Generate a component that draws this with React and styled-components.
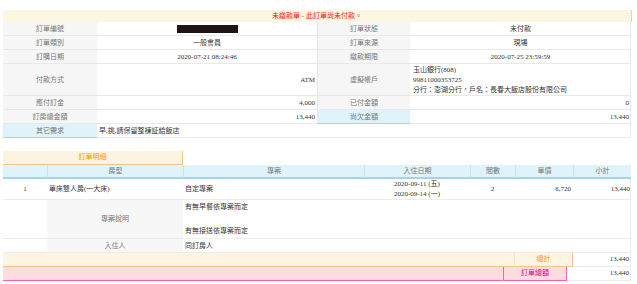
import React from "react";
import styled, { createGlobalStyle } from "styled-components";

const Global = createGlobalStyle`
  *, *::before, *::after { box-sizing: border-box; }
  html, body { margin: 0; padding: 0; background: #fff; }
  body {
    font-family: "Liberation Serif", "Noto Sans CJK TC", serif;
    font-size: 7px;
    color: #333;
  }
`;

const Page = styled.div`
  padding: 10px 0 0 3px;
  width: 631px;
`;

const InfoGrid = styled.div`
  display: grid;
  grid-template-columns: 94px 220px 93px 221px;
  width: 628px;
  border-right: 1px solid #ececec;
`;

const Banner = styled.div`
  grid-column: 1 / -1;
  height: 12px;
  line-height: 12px;
  background: #fdf6e0;
  border-right: 1px solid #efd39e;
  margin-right: -1px;
  color: #f21515;
  text-align: center;
`;

const Label = styled.div`
  min-height: 14px;
  display: flex;
  align-items: center;
  justify-content: center;
  padding: 1px 2px 1px;
  line-height: 10px;
  color: #777;
  background: ${(p) => (p.$blue ? "#dff3fb" : "#f6f6f6")};
  border-bottom: 1px solid ${(p) => (p.$blue ? "#a3d5ea" : "#e9e9e9")};
  border-left: ${(p) => (p.$divider ? "1px solid #e6e6e6" : "none")};
`;

const alignMap = { left: "flex-start", right: "flex-end", center: "center" };

const Value = styled.div`
  min-height: 14px;
  display: flex;
  flex-direction: column;
  justify-content: center;
  align-items: ${(p) => alignMap[p.$align || "center"]};
  text-align: ${(p) => p.$align || "center"};
  padding: ${(p) => (p.$tight ? "1px 3px 0" : "1px 2px")};
  line-height: 10px;
  color: #333;
  border-bottom: 1px solid #e9e9e9;
  grid-column: span ${(p) => p.$span || 1};
`;

const Masked = styled.span`
  display: block;
  width: 61px;
  height: 8px;
  background: #1d1414;
`;

const DetailSection = styled.div`
  margin-top: 13px;
  width: 628px;
`;

const Tab = styled.div`
  width: 180px;
  height: 14px;
  line-height: 13px;
  text-align: center;
  background: #fdf4df;
  border-bottom: 1px solid #f2c48e;
  border-right: 1px solid #f2c48e;
  color: #f29600;
`;

const DetailGrid = styled.div`
  display: grid;
  grid-template-columns: 44px 136px 181px 106px 45px 58px 58px;
  border-right: 1px solid #ececec;
`;

const Head = styled.div`
  height: 14px;
  line-height: 12px;
  text-align: center;
  color: #777;
  background: #dff3fb;
  border-bottom: 2px solid #a5d4ea;
  border-left: ${(p) => (p.$first ? "none" : "1px solid #c4e4f2")};
`;

const Cell = styled.div`
  display: flex;
  flex-direction: column;
  justify-content: center;
  align-items: ${(p) => alignMap[p.$align || "center"]};
  text-align: ${(p) => p.$align || "center"};
  padding: ${(p) => p.$pad || "1px 2px"};
  min-height: 14px;
  line-height: ${(p) => p.$lh || "10px"};
  color: ${(p) => (p.$muted ? "#777" : "#333")};
  background: ${(p) => (p.$shade ? "#f7f7f7" : "transparent")};
  border-bottom: 1px solid #ececec;
  grid-column: span ${(p) => p.$span || 1};
`;

const FooterRow = styled.div`
  display: flex;
  height: 14px;
  line-height: 13px;
  width: 628px;
`;

const Filler = styled.div`
  width: ${(p) => p.$w}px;
  background: ${(p) => p.$bg};
  border-bottom: 1px solid ${(p) => p.$line};
  border-right: 1px solid ${(p) => p.$edge};
`;

const FooterLabel = styled.div`
  width: ${(p) => p.$w}px;
  text-align: center;
  background: ${(p) => p.$bg};
  color: ${(p) => p.$color};
  border: 1px solid ${(p) => p.$line};
  border-top: none;
  border-left: ${(p) => (p.$boxed ? `1px solid ${p.$line}` : "none")};
`;

const FooterValue = styled.div`
  flex: 1;
  text-align: right;
  padding-right: 1px;
  color: #333;
  border-bottom: 1px solid #ececec;
  border-right: 1px solid #ececec;
`;

const Line = styled.span`
  display: block;
  min-height: ${(p) => p.$h || "10px"};
`;

export default function App() {
  return (
    <>
      <Global />
      <Page>
        <InfoGrid>
          <Banner>未繳款單 - 此訂單尚未付款。</Banner>

          <Label>訂單編號</Label>
          <Value><Masked /></Value>
          <Label $divider>訂單狀態</Label>
          <Value>未付款</Value>

          <Label>訂單類別</Label>
          <Value>一般會員</Value>
          <Label $divider>訂單來源</Label>
          <Value>現場</Value>

          <Label>訂購日期</Label>
          <Value>2020-07-21 08:24:46</Value>
          <Label $divider>繳款期限</Label>
          <Value>2020-07-25 23:59:59</Value>

          <Label>付款方式</Label>
          <Value $align="right">ATM</Value>
          <Label $divider>虛擬帳戶</Label>
          <Value $align="left" $tight>
            <Line>玉山銀行(808)</Line>
            <Line>99811000353725</Line>
            <Line>分行：澎湖分行，戶名：長春大飯店股份有限公司</Line>
          </Value>

          <Label>應付訂金</Label>
          <Value $align="right">4,000</Value>
          <Label $divider>已付金額</Label>
          <Value $align="right">0</Value>

          <Label>訂房總金額</Label>
          <Value $align="right">13,440</Value>
          <Label $divider $blue>尚欠金額</Label>
          <Value $align="right">13,440</Value>

          <Label $blue>其它需求</Label>
          <Value $align="left" $span={3}>早,挑,請保留整棟証給飯店</Value>
        </InfoGrid>

        <DetailSection>
          <Tab>訂單明細</Tab>
          <DetailGrid>
            <Head $first />
            <Head>房型</Head>
            <Head>專案</Head>
            <Head>入住日期</Head>
            <Head>間數</Head>
            <Head>單價</Head>
            <Head>小計</Head>

            <Cell $pad="0 2px">1</Cell>
            <Cell $align="left" $pad="0 2px">單床雙人房(一大床)</Cell>
            <Cell $align="left" $pad="0 2px">自定專案</Cell>
            <Cell $pad="0 2px">
              <Line>2020-09-11 (五)</Line>
              <Line>2020-09-14 (一)</Line>
            </Cell>
            <Cell $pad="0 2px">2</Cell>
            <Cell $align="right" $pad="0 2px">6,720</Cell>
            <Cell $align="right" $pad="0 1px">13,440</Cell>

            <Cell />
            <Cell $shade $muted>專案說明</Cell>
            <Cell $align="left" $span={5} $lh="12px">
              <Line $h="12px">有無早餐依專案而定</Line>
              <Line $h="12px"></Line>
              <Line $h="12px">有無接送依專案而定</Line>
            </Cell>

            <Cell />
            <Cell $shade $muted>入住人</Cell>
            <Cell $align="left" $span={5}>同訂房人</Cell>
          </DetailGrid>

          <FooterRow>
            <Filler $w={512} $bg="#fdf5e1" $line="#f2c291" $edge="#f6e2c4" />
            <FooterLabel $w={58} $bg="#fdf5e1" $color="#f39a2a" $line="#f2c291">總計</FooterLabel>
            <FooterValue>13,440</FooterValue>
          </FooterRow>
          <FooterRow>
            <Filler $w={500} $bg="#fcdcdc" $line="#ff5db1" $edge="#fcdcdc" />
            <FooterLabel $w={64} $boxed $bg="#fcdcdc" $color="#e4007f" $line="#ff5db1">訂單總額</FooterLabel>
            <FooterValue>13,440</FooterValue>
          </FooterRow>
        </DetailSection>
      </Page>
    </>
  );
}
